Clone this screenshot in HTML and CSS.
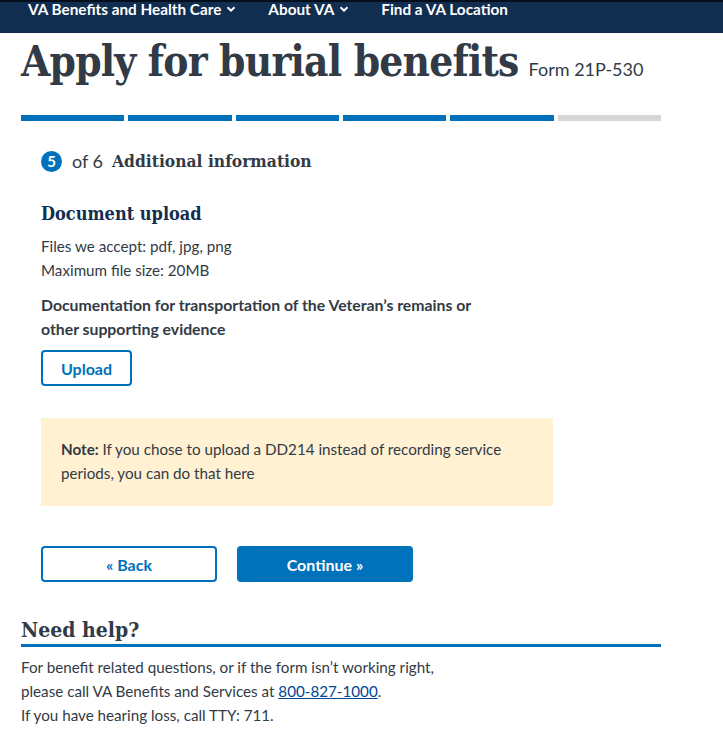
FILE: index.html
```html
<!DOCTYPE html>
<html lang="en">
<head>
<meta charset="utf-8">
<title>Apply for burial benefits</title>
<link rel="stylesheet" href="styles.css">
</head>
<body>
<header class="topnav">
  <ul class="nav-list">
    <li class="nav-item">VA Benefits and Health Care <svg class="chev" viewBox="0 0 10 10" width="10" height="10"><path d="M1.5 3.2 L5 6.6 L8.5 3.2" fill="none" stroke="#fff" stroke-width="2"/></svg></li>
    <li class="nav-item">About VA <svg class="chev" viewBox="0 0 10 10" width="10" height="10"><path d="M1.5 3.2 L5 6.6 L8.5 3.2" fill="none" stroke="#fff" stroke-width="2"/></svg></li>
    <li class="nav-item">Find a VA Location</li>
  </ul>
</header>
<main class="page">
  <div class="title-row">
    <h1 class="title">Apply for burial benefits</h1>
    <span class="form-no">Form 21P-530</span>
  </div>
  <div class="progress">
    <span class="seg done"></span><span class="seg done"></span><span class="seg done"></span><span class="seg done"></span><span class="seg done"></span><span class="seg"></span>
  </div>
  <section class="form-body">
    <h2 class="step"><span class="step-num">5</span><span class="step-of">of 6</span><span class="step-name">Additional information</span></h2>
    <h3 class="sub">Document upload</h3>
    <p class="text">Files we accept: pdf, jpg, png<br>Maximum file size: 20MB</p>
    <p class="label">Documentation for transportation of the Veteran’s remains or<br>other supporting evidence</p>
    <button class="btn-outline upload">Upload</button>
    <div class="note"><p><strong>Note:</strong> If you chose to upload a DD214 instead of recording service<br>periods, you can do that here</p></div>
    <div class="actions">
      <button class="btn-outline wide">« Back</button>
      <button class="btn-primary wide">Continue »</button>
    </div>
  </section>
  <section class="help">
    <h2 class="help-title">Need help?</h2>
    <p class="text">For benefit related questions, or if the form isn’t working right,<br>please call VA Benefits and Services at <a href="#" class="phone">800-827-1000</a>.<br>If you have hearing loss, call TTY: 711.</p>
  </section>
</main>
</body>
</html>
```
FILE: styles.css
```css
* { box-sizing: border-box; }
html, body { margin: 0; padding: 0; background: #fff; }
body {
  font-family: "Lato", "Liberation Sans", sans-serif;
  color: #323a45;
  font-size: 15.2px;
}
.topnav {
  background: #112e51;
  border-top: 2px solid #050f1c;
  height: 33px;
}
.nav-list {
  list-style: none;
  margin: 0;
  padding: 0 0 0 28px;
  display: flex;
  gap: 32px;
}
.nav-item {
  color: #fff;
  font-weight: 700;
  font-size: 15.3px;
  line-height: 14px;
  display: flex;
  align-items: center;
  gap: 5px;
  white-space: nowrap;
}
.page { padding: 0 62px 0 21px; }
.title-row {
  display: flex;
  align-items: baseline;
  gap: 10px;
  height: 80px;
  white-space: nowrap;
}
.title {
  margin: 0;
  font-family: "DejaVu Serif Condensed", "DejaVu Serif", serif;
  font-size: 42px;
  font-weight: 700;
  letter-spacing: -0.8px;
  color: #323a45;
  line-height: 58px;
}
.form-no { font-size: 18px; color: #323a45; }
.progress {
  display: flex;
  gap: 4px;
  margin-top: 2px;
  width: 640px;
}
.seg { flex: 1; height: 6px; background: #d6d7d9; }
.seg.done { background: #0071bb; }
.form-body { padding: 0 20px; }
.step {
  margin: 28px 0 0;
  display: flex;
  align-items: center;
  font-size: 17px;
  line-height: 24px;
  white-space: nowrap;
}
.step-num {
  width: 21px; height: 21px;
  border-radius: 50%;
  background: #0071bb;
  color: #fff;
  font-family: "Lato", sans-serif;
  font-weight: 700;
  font-size: 15px;
  display: flex; align-items: center; justify-content: center;
  margin-right: 10px;
}
.step-of { font-family: "Lato", sans-serif; font-weight: 400; margin-right: 9px; font-size: 18px; }
.step-name { font-family: "DejaVu Serif Condensed", "DejaVu Serif", serif; font-weight: 700; font-size: 17.3px; }
.sub {
  margin: 29px 0 0;
  font-family: "DejaVu Serif Condensed", "DejaVu Serif", serif;
  font-size: 18px;
  line-height: 24px;
  color: #112e51;
}
.text { margin: 8px 0 0; line-height: 24px; font-size: 15.2px; white-space: nowrap; }
.label { margin: 11px 0 0; font-weight: 700; line-height: 24px; font-size: 15.8px; white-space: nowrap; }
.btn-outline, .btn-primary {
  font-family: "Lato", sans-serif;
  font-weight: 700;
  font-size: 16px;
  border-radius: 4px;
  height: 36px;
  cursor: pointer;
}
.btn-outline { background: #fff; color: #0071bb; border: 2px solid #0071bb; }
.btn-primary { background: #0071bb; color: #fff; border: 2px solid #0071bb; }
.upload { margin-top: 9px; width: 91px; display: block; }
.note {
  margin-top: 32px;
  width: 512px;
  background: #fff1d2;
  padding: 19px 20px 21px;
}
.note p { margin: 0; line-height: 24px; font-size: 15.2px; white-space: nowrap; }
.actions { margin-top: 40px; display: flex; gap: 20px; }
.wide { width: 176px; }
.help { margin-top: 34px; }
.help-title {
  margin: 0;
  font-family: "DejaVu Serif Condensed", "DejaVu Serif", serif;
  font-size: 21px;
  line-height: 28px;
  padding-bottom: 0;
  border-bottom: 3px solid #0071bb;
  width: 640px;
}
.help .text { margin-top: 8px; }
.phone { color: #004795; }
```
